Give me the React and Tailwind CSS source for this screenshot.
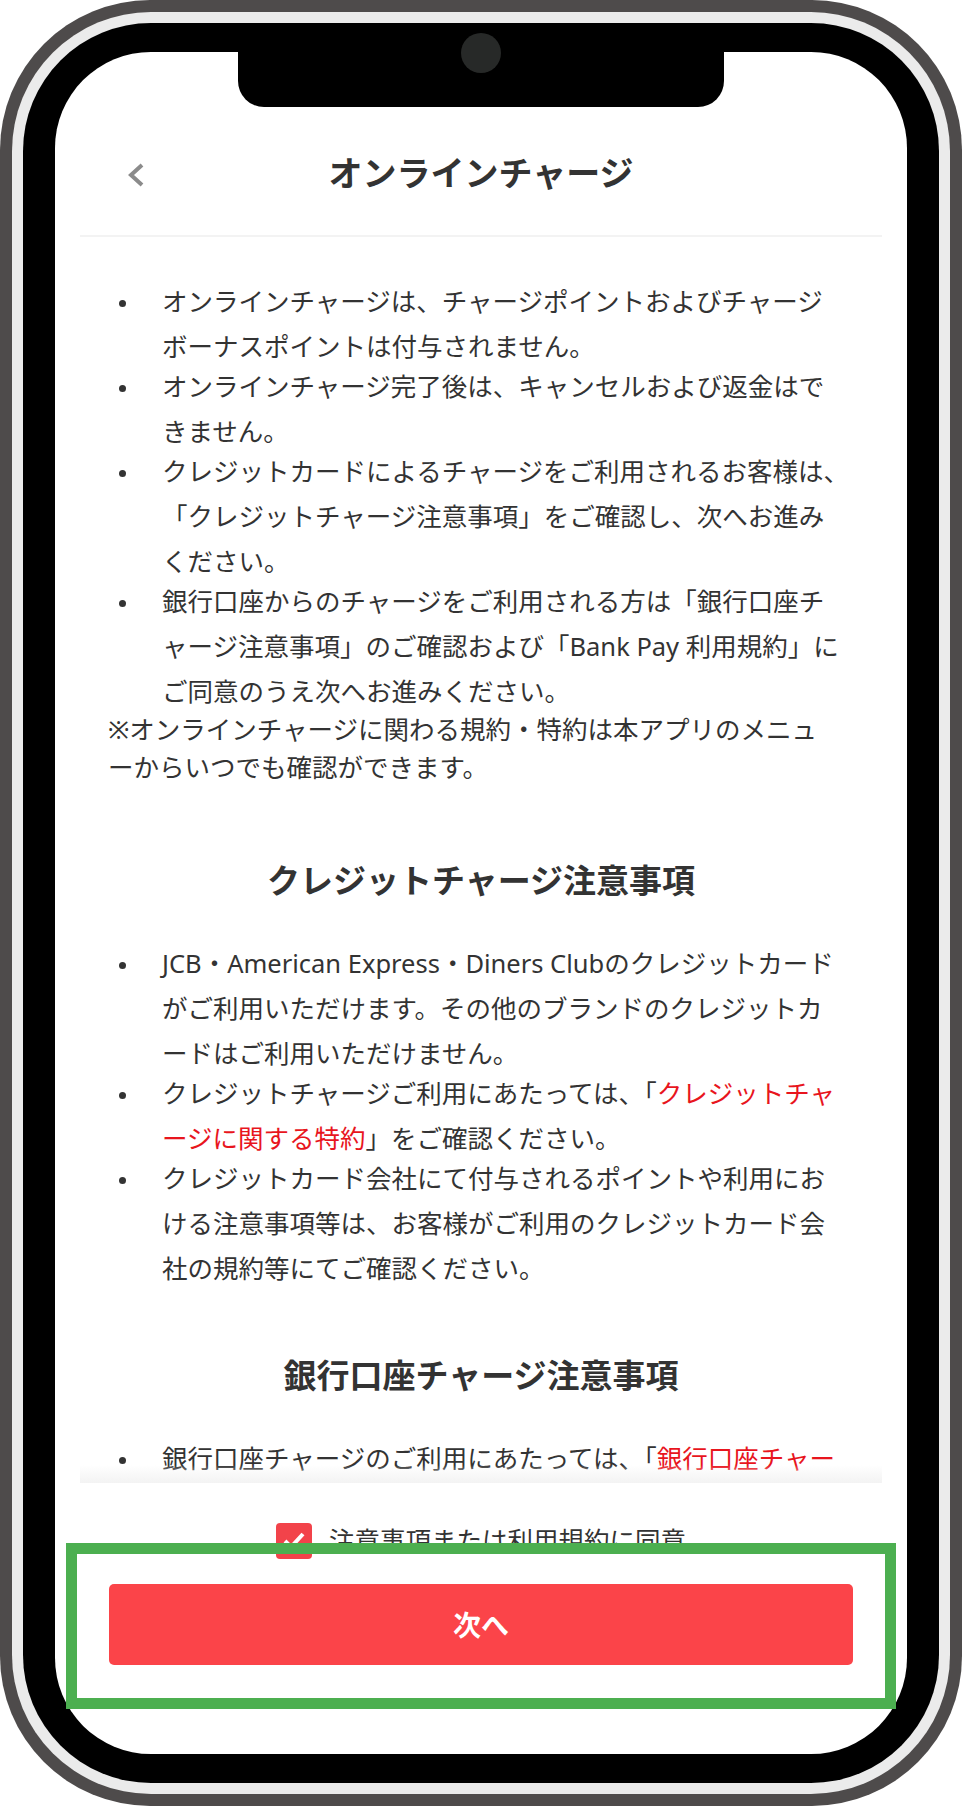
import React from 'react'

const red = (t) => <span className="text-[#e8151d]">{t}</span>

const topNotes = [
  ['オンラインチャージは、チャージポイントおよびチャージ', 'ボーナスポイントは付与されません。'],
  ['オンラインチャージ完了後は、キャンセルおよび返金はで', 'きません。'],
  ['クレジットカードによるチャージをご利用されるお客様は、', '「クレジットチャージ注意事項」をご確認し、次へお進み', 'ください。'],
  ['銀行口座からのチャージをご利用される方は「銀行口座チ', 'ャージ注意事項」のご確認および「Bank Pay 利用規約」に', 'ご同意のうえ次へお進みください。'],
]

const creditNotes = [
  ['JCB・American Express・Diners Clubのクレジットカード', 'がご利用いただけます。その他のブランドのクレジットカ', 'ードはご利用いただけません。'],
  [<>クレジットチャージご利用にあたっては、「{red('クレジットチャ')}</>, <>{red('ージに関する特約')}」をご確認ください。</>],
  ['クレジットカード会社にて付与されるポイントや利用にお', 'ける注意事項等は、お客様がご利用のクレジットカード会', '社の規約等にてご確認ください。'],
]

const bankNotes = [
  [<>銀行口座チャージのご利用にあたっては、「{red('銀行口座チャー')}</>, <>{red('ジに関する特約')}」をご確認ください。</>],
  ['Bank Payのご利用には、事前に銀行口座の登録が必要で', 'す。'],
]

function NoteList({ items }) {
  return (
    <ul className="whitespace-nowrap">
      {items.map((lines, i) => (
        <li key={i} className={i > 0 ? 'flex leading-[45px] -mt-[5px]' : 'flex leading-[45px]'}>
          <span className="w-[54px] shrink-0">
            <span className="mt-[21px] ml-[11px] block size-[7px] rounded-full bg-[#333]" />
          </span>
          <p>
            {lines.map((line, j) => (
              <React.Fragment key={j}>
                {j > 0 && <br />}
                {line}
              </React.Fragment>
            ))}
          </p>
        </li>
      ))}
    </ul>
  )
}

export default function App() {
  return (
    <div className="w-[962px] h-[1806px] bg-white font-['Noto_Sans','Noto_Sans_CJK_JP',sans-serif] text-[#333]">
      {/* phone frame */}
      <div className="h-full rounded-[150px] bg-[#4e4b4b] p-[12px]">
        <div className="h-full rounded-[139px] bg-[#ebebeb] p-[11px]">
          <div className="h-full rounded-[128px] bg-black px-[32px] py-[29px]">
            <div className="relative flex h-full flex-col rounded-[96px] bg-white">
              {/* notch */}
              <div className="absolute left-[183px] top-0 h-[55px] w-[486px] rounded-b-[26px] bg-black">
                <div className="absolute -top-[19px] left-[223px] size-[40px] rounded-full bg-[#272928]" />
              </div>

              {/* header */}
              <div className="mx-[25px] flex h-[185px] shrink-0 items-end border-b-2 border-[#f3f3f3]">
                <div className="relative mb-[30px] flex h-[64px] w-full items-center justify-center">
                  <button className="absolute left-[44px] top-[19px] p-[2px]">
                    <svg width="20" height="26" viewBox="0 0 20 26" fill="none">
                      <polyline points="16,3 5,13 16,23" stroke="#8b8b8b" strokeWidth="4" strokeLinejoin="miter" />
                    </svg>
                  </button>
                  <h1 className="text-[34px] font-bold leading-none">オンラインチャージ</h1>
                </div>
              </div>

              {/* scrolling notes */}
              <div className="relative mx-[25px] flex-1 overflow-hidden">
                <div className="px-[28px] pt-[42px] text-[25.5px]">
                  <NoteList items={topNotes} />
                  <p className="-mt-[4px] whitespace-nowrap leading-[38px]">
                    ※オンラインチャージに関わる規約・特約は本アプリのメニュ
                    <br />
                    ーからいつでも確認ができます。
                  </p>

                  <h2 className="mt-[72px] mb-[38px] text-center text-[33px] font-bold leading-[45px]">
                    クレジットチャージ注意事項
                  </h2>
                  <NoteList items={creditNotes} />

                  <h2 className="mt-[62px] mb-[38px] text-center text-[33px] font-bold leading-[45px]">
                    銀行口座チャージ注意事項
                  </h2>
                  <NoteList items={bankNotes} />
                </div>
                <div className="absolute inset-x-0 bottom-0 h-[18px] bg-gradient-to-b from-white/0 to-[#f3f3f3]" />
              </div>

              {/* agree + next */}
              <div className="relative mx-[25px] shrink-0 px-[29px] pt-[35px] pb-[89px]">
                <label className="flex h-[45px] items-center justify-center gap-[17px]">
                  <span className="flex size-[36px] items-center justify-center rounded-[4px] bg-[#f2434a]">
                    <svg width="28" height="28" viewBox="0 0 28 28" fill="none">
                      <polyline points="5,14 11,20 23,7" stroke="white" strokeWidth="4" />
                    </svg>
                  </span>
                  <span className="text-[25.5px]">注意事項または利用規約に同意</span>
                </label>
                <button className="mt-[21px] flex h-[81px] w-full items-center justify-center rounded-[5px] bg-[#fb4449] text-[28px] font-bold text-white">
                  次へ
                </button>

                {/* highlight frame */}
                <div className="pointer-events-none absolute -left-[14px] top-[60px] h-[166px] w-[830px] border-[11px] border-[#4caf50]" />
              </div>
            </div>
          </div>
        </div>
      </div>
    </div>
  )
}
